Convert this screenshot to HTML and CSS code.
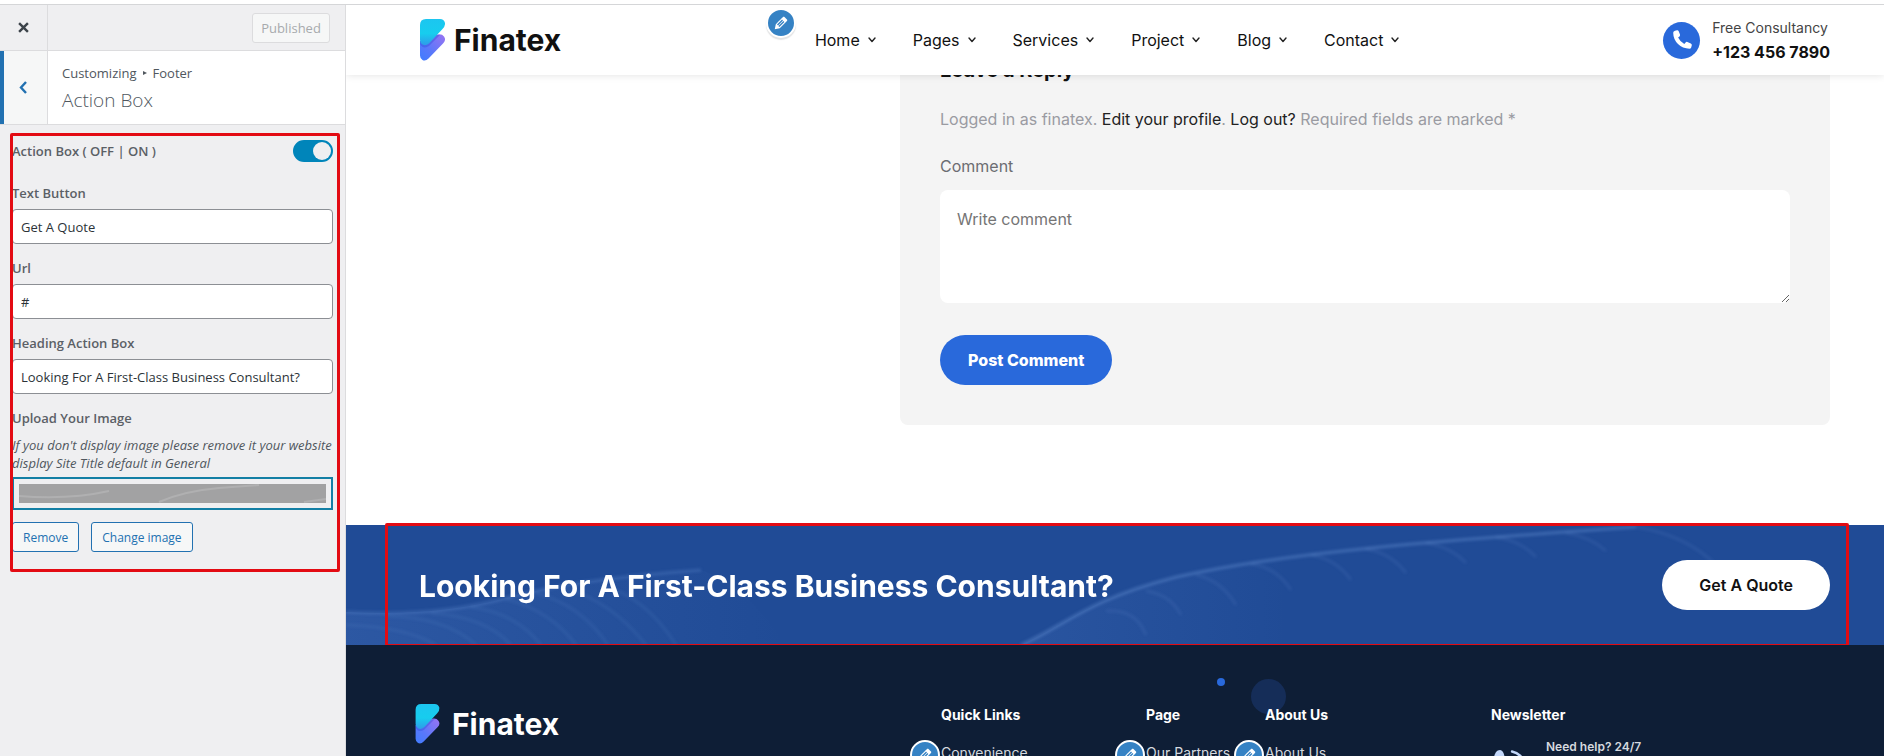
FILE: index.html
```html
<!DOCTYPE html>
<html lang="en">
<head>
<meta charset="utf-8">
<title>Customize: Finatex</title>
<link rel="stylesheet" href="styles.css">
</head>
<body>
<svg class="defs" aria-hidden="true">
  <defs>
    <linearGradient id="cyan" x1="0" y1="0" x2="0" y2="1"><stop offset="0" stop-color="#1cc6f0"/><stop offset=".55" stop-color="#17cdee"/><stop offset="1" stop-color="#2f9be8"/></linearGradient>
    <linearGradient id="violet" x1="1" y1="0" x2="0" y2="1"><stop offset="0" stop-color="#9a74f2"/><stop offset=".6" stop-color="#5a78fa"/><stop offset="1" stop-color="#3f7cff"/></linearGradient>
    <symbol id="logo" viewBox="0 0 25 42">
      <path fill="url(#violet)" d="M0 22 L17 15.500Q22 14.500 24 17.500Q26.500 21 23 24.500L8.500 39.500Q5.500 42.500 2.500 41Q0 39.500 0 36.500Z"/>
      <path fill="#1f3fd0" opacity=".3" d="M0 22 L16 16 L20 16 L9 27Q5 29.500 2 27.500Q0 26 0 24Z"/>
      <path fill="url(#cyan)" d="M6 0H20Q24 0 25 4Q25.300 7 22.500 10L9 24.500Q5.500 27.500 2.500 25.500Q0 24 0 21V6Q0 0 6 0Z"/>
    </symbol>
    <symbol id="pencil" viewBox="0 0 20 20">
      <path fill="#fff" d="M13.890 3.390l2.710 2.720c.46.46.42 1.240.03 1.640l-8.010 8.020-5.560 1.160 1.160-5.580s7.600-7.630 7.990-8.030c.39-.39 1.220-.39 1.680.07zm-2.730 2.790l-5.590 5.610 1.110 1.110 5.540-5.650zm-2.970 8.230l5.580-5.600-1.070-1.080-5.590 5.600z"/>
    </symbol>
    <symbol id="phone" viewBox="0 0 20 20">
      <path fill="#fff" d="M3 .8 5 .2Q6.200 0 6.700 1.200L8 4.600Q8.300 5.700 7.500 6.400L6.100 7.600Q8 11.800 12.300 13.900L13.600 12.400Q14.400 11.600 15.400 12L18.800 13.400Q20 14 19.800 15.200L19.200 17.500Q18.700 18.700 17.500 18.700 10.500 18.500 6 14 1.300 9.500 1.200 2.800 1.300 1.300 3 .8Z"/>
    </symbol>
    <symbol id="chevron" viewBox="0 0 8 6"><path fill="none" stroke="#222" stroke-width="1.400" stroke-linecap="round" stroke-linejoin="round" d="M1 1 4 4.500 7 1"/></symbol>
  </defs>
</svg>
<div class="customizer">
  <aside class="sidebar">
    <div class="actions">
      <button class="close" aria-label="Close"><svg viewBox="0 0 10 10" width="11" height="11"><path d="M1 1 9 9M9 1 1 9" stroke="#3c434a" stroke-width="2.200"/></svg></button>
      <button class="published" disabled>Published</button>
    </div>
    <div class="panel-head">
      <button class="back" aria-label="Back"><svg viewBox="0 0 8 13" width="8" height="13"><path d="M7 1 2 6.500 7 12" fill="none" stroke="#2271b1" stroke-width="2.400"/></svg></button>
      <div class="panel-title">
        <span class="crumbs">Customizing <i class="arrow"></i> Footer</span>
        <h3>Action Box</h3>
      </div>
    </div>
    <form class="controls">
      <div class="toggle-row">
        <label for="onoff">Action Box ( OFF | ON )</label>
        <input class="toggle" id="onoff" type="checkbox" checked>
      </div>
      <div class="field"><label for="btn-text">Text Button</label><input id="btn-text" type="text" value="Get A Quote"></div>
      <div class="field"><label for="url">Url</label><input id="url" type="text" value="#"></div>
      <div class="field"><label for="heading">Heading Action Box</label><input id="heading" type="text" value="Looking For A First-Class Business Consultant?"></div>
      <div class="field upload">
        <span class="label">Upload Your Image</span>
        <p>If you don't display image please remove it your website display Site Title default in General</p>
        <div class="thumb">
          <svg viewBox="0 0 307 19" preserveAspectRatio="none"><rect width="307" height="19" fill="#a2a2a3"/><path d="M0 12Q50 16 90 7M140 18Q165 7 200 4L240 1M285 18L307 15" fill="none" stroke="#b0b0b1" stroke-width="2"/></svg>
        </div>
        <div class="buttons"><button type="button">Remove</button><button type="button">Change image</button></div>
      </div>
    </form>
    <div class="mark mark-panel"></div>
  </aside>

  <div class="preview">
    <header class="site-header">
      <a class="brand" href="#"><svg class="brand-icon"><use href="#logo"/></svg>Finatex</a>
      <nav class="menu">
        <button class="edit edit-menu" aria-label="Edit menu"><svg><use href="#pencil"/></svg></button>
        <a href="#">Home<svg><use href="#chevron"/></svg></a>
        <a href="#">Pages<svg><use href="#chevron"/></svg></a>
        <a href="#">Services<svg><use href="#chevron"/></svg></a>
        <a href="#">Project<svg><use href="#chevron"/></svg></a>
        <a href="#">Blog<svg><use href="#chevron"/></svg></a>
        <a href="#">Contact<svg><use href="#chevron"/></svg></a>
      </nav>
      <div class="call">
        <span class="call-icon"><svg><use href="#phone"/></svg></span>
        <div><span class="call-label">Free Consultancy</span><a href="#">+123 456 7890</a></div>
      </div>
    </header>

    <main class="content">
      <form class="reply">
        <h3>Leave a Reply</h3>
        <p class="logged">Logged in as finatex. <a href="#">Edit your profile</a>. <a href="#">Log out?</a> Required fields are marked *</p>
        <label for="comment">Comment</label>
        <textarea id="comment" placeholder="Write comment"></textarea>
        <button type="button">Post Comment</button>
      </form>
    </main>

    <section class="cta">
      <svg class="waves" viewBox="0 0 1538 120" preserveAspectRatio="none" aria-hidden="true">
        <defs>
          <linearGradient id="w1" x1="0" y1="0" x2="1" y2="0"><stop offset="0" stop-color="#6f9be6" stop-opacity=".16"/><stop offset=".5" stop-color="#6f9be6" stop-opacity=".08"/><stop offset="1" stop-color="#6f9be6" stop-opacity="0"/></linearGradient>
          <linearGradient id="w2" x1="0" y1="0" x2="1" y2="0"><stop offset="0" stop-color="#6f9be6" stop-opacity=".12"/><stop offset=".35" stop-color="#6f9be6" stop-opacity="0"/></linearGradient>
          <filter id="soft" x="-5%" y="-20%" width="110%" height="140%"><feGaussianBlur stdDeviation="1.500"/></filter>
        </defs>
        <path fill="url(#w1)" d="M0 87Q90 92 160 73T355 45Q400 60 440 120H0Z"/>
        <path fill="url(#w2)" d="M675 120C720 100 740 75 830 52C940 27 1100 15 1290 2Q1370 10 1400 60L1440 120Z"/>
        <g fill="none" stroke="#86aeee" filter="url(#soft)">
          <path opacity=".2" stroke-width="3" d="M0 87Q90 92 160 73T355 45"/>
          <path opacity=".3" stroke-width="3" d="M675 120C720 100 740 75 830 52C940 27 1100 15 1290 2"/>
          <path opacity=".09" stroke-width="3" d="M0 100Q60 102 90 120M40 91Q100 92 130 120M85 88Q140 92 165 120M125 82Q170 88 195 120M160 74Q205 86 230 120M190 68Q235 80 262 120M220 64Q265 76 300 120M255 60Q300 72 330 120"/>
          <path opacity=".1" stroke-width="3" d="M760 86Q790 84 800 110M800 66Q825 70 835 90M850 50Q875 55 890 80M905 39Q930 42 945 65M965 30Q990 34 1005 55M1020 24Q1045 28 1060 48M1080 18Q1105 22 1120 38M1150 12Q1175 16 1190 32M1220 8Q1245 12 1260 26M1290 2Q1340 10 1370 40"/>
        </g>
      </svg>
      <h2>Looking For A First-Class Business Consultant?</h2>
      <a class="quote" href="#">Get A Quote</a>
      <div class="mark mark-cta"></div>
    </section>

    <footer class="footer">
      <span class="dot"></span><span class="disc"></span>
      <div class="foot-brand"><a class="brand" href="#"><svg class="brand-icon"><use href="#logo"/></svg>Finatex</a></div>
      <div class="foot-col"><h4>Quick Links</h4><div class="item"><button class="edit" aria-label="Edit quick links"><svg><use href="#pencil"/></svg></button><a href="#">Convenience</a></div></div>
      <div class="foot-col"><h4>Page</h4><div class="item"><button class="edit" aria-label="Edit page links"><svg><use href="#pencil"/></svg></button><a href="#">Our Partners</a></div></div>
      <div class="foot-col"><h4>About Us</h4><div class="item"><button class="edit" aria-label="Edit about links"><svg><use href="#pencil"/></svg></button><a href="#">About Us</a></div></div>
      <div class="foot-col"><h4>Newsletter</h4>
        <div class="help">
          <svg viewBox="0 0 36 36" width="36" height="36"><g fill="#c3d8fb"><path d="M9 0C12 0 14 5 13.500 9L10 13Q14 21 21 24L26 20Q33 21 34 26 32 34 26 34 6 30 3 8 4 0 9 0Z"/></g><g fill="none" stroke="#c3d8fb" stroke-width="2.400" stroke-linecap="round"><path d="M21 1.500Q31 3.500 33 14"/><path d="M21 8Q26 9 27 15"/></g></svg>
          <span>Need help? 24/7</span>
        </div>
      </div>
    </footer>
  </div>
</div>
</body>
</html>
```
FILE: styles.css
```css
* { box-sizing: border-box; }
body { margin: 0; background: #fff; font-family: Inter, "Liberation Sans", sans-serif; }
h2, h3, h4, p { margin: 0; }
a { color: inherit; text-decoration: none; }
button, input, textarea { font: inherit; margin: 0; }
button { cursor: pointer; }
.defs { position: absolute; width: 0; height: 0; }

.customizer { display: flex; height: calc(100vh - 4px); margin-top: 4px; border-top: 1px solid #d5d6d8; overflow: hidden; }

/* Settings panel */
.sidebar { position: relative; flex: 0 0 346px; background: #efeff1; border-right: 1px solid #dcdcde; font-family: "Open Sans", "Noto Sans", sans-serif; font-size: 13px; color: #50575e; }
.actions { display: flex; justify-content: space-between; align-items: center; height: 46px; border-bottom: 1px solid #dcdcde; padding-right: 15px; }
.close { width: 48px; height: 45px; display: grid; place-items: center; background: none; border: 0; border-right: 1px solid #dcdcde; }
.published { height: 30px; width: 78px; padding: 0; background: #f6f7f7; border: 1px solid #dcdcde; border-radius: 3px; color: #a7aaad; }
.panel-head { display: flex; height: 74px; background: #fff; border-bottom: 1px solid #dcdcde; }
.back { width: 48px; padding: 0 6px 0 0; background: #f6f7f7; border: 0; border-left: 4px solid #2271b1; border-right: 1px solid #dcdcde; display: grid; place-items: center; }
.panel-title { padding: 12px 14px; }
.crumbs { display: flex; align-items: center; gap: 6px; line-height: 20px; }
.arrow { border: 2px solid transparent; border-left: 4px solid #50575e; border-right: 0; }
.panel-title h3 { font-size: 19px; line-height: 34px; font-weight: 300; color: #50575e; }
.controls { padding: 14px 12px; }
.toggle-row { display: flex; justify-content: space-between; align-items: center; height: 24px; margin-bottom: 18px; }
.toggle-row label, .field label, .label { display: block; font-size: 13px; line-height: 24px; font-weight: 600; color: #5b6066; }
.toggle { appearance: none; width: 40px; height: 22px; border-radius: 11px; border: 2px solid #0085ba; background: #0085ba; display: flex; justify-content: flex-end; }
.toggle::before { content: ""; width: 18px; height: 18px; border-radius: 50%; background: #efeff1; }
.field { margin-bottom: 12px; }
.field input { display: block; width: 100%; height: 35px; margin-top: 4px; padding: 0 8px; border: 1px solid #8c8f94; border-radius: 4px; background: #fff; color: #2c3338; }
.upload p { font-style: italic; font-size: 13px; line-height: 18px; margin: 6px -8px 5px 0; }
.thumb { height: 33px; padding: 5px; border: 2px solid #137fa5; background: #efeff1; }
.thumb svg { display: block; width: 100%; height: 19px; }
.buttons { display: flex; gap: 12px; margin-top: 12px; }
.buttons button { height: 30px; padding: 0 10px; border: 1px solid #2271b1; border-radius: 3px; background: #f6f7f7; color: #2271b1; font-size: 12px; }

/* Highlight frames */
.mark { position: absolute; border: 3px solid #e30b13; border-radius: 2px; pointer-events: none; }
.mark-panel { inset: 128px 5px auto 10px; height: 439px; }
.mark-cta { inset: -2px 35px -2px 39px; }

/* Site preview */
.preview { flex: 1; min-width: 0; overflow: hidden; color: #111; }
.site-header { position: relative; z-index: 1; display: flex; align-items: center; justify-content: space-between; height: 70px; padding: 0 54px 0 74px; background: #fff; box-shadow: 0 0 8px rgba(0, 0, 0, .12); }
.brand { display: flex; align-items: center; gap: 9px; font-size: 30px; line-height: 42px; font-weight: 700; }
.brand-icon { width: 25px; height: 42px; }
.menu { position: relative; display: flex; gap: 37px; margin-right: 10px; font-size: 16px; line-height: 24px; }
.menu a { display: flex; align-items: center; gap: 8px; }
.menu a svg { width: 8px; height: 6px; }
.edit { position: absolute; width: 30px; height: 30px; padding: 0; border: 2px solid #fff; border-radius: 50%; background: #3582c4; display: grid; place-items: center; box-shadow: 0 2px 1px rgba(60, 67, 74, .15); }
.edit svg { width: 18px; height: 18px; }
.edit-menu { left: -49px; top: -20px; }
.call { display: flex; align-items: center; gap: 12px; }
.call-icon { width: 37px; height: 37px; border-radius: 50%; background: #2969db; display: grid; place-items: center; }
.call-icon svg { width: 20px; height: 20px; }
.call-label { display: block; font-size: 14px; line-height: 24px; color: #444; }
.call a { font-size: 16px; line-height: 24px; font-weight: 700; }

.content { display: grid; grid-template-columns: repeat(12, 1fr); gap: 30px; margin-top: -57px; padding: 0 54px 100px 74px; }
.reply { grid-column: 5 / -1; display: flex; flex-direction: column; align-items: flex-start; padding: 40px; border-radius: 8px; background: #f4f4f4; font-size: 16px; line-height: 24px; color: #6c6d72; }
.reply h3 { font-size: 20px; line-height: 24px; color: #111; margin-bottom: 25px; }
.logged { margin-bottom: 23px; color: #9a9ba2; }
.logged a { color: #222; }
.reply textarea { width: 100%; height: 113px; margin: 12px 0 32px; padding: 17px; border: 0; border-radius: 8px; background: #fff; }
.reply textarea::placeholder { color: #757575; }
.reply button { height: 50px; padding: 0 28px; border: 0; border-radius: 25px; background: #2969db; color: #fff; font-weight: 800; }

.cta { position: relative; display: flex; align-items: center; justify-content: space-between; height: 120px; padding: 0 54px 0 73px; background: #204b96; }
.waves { position: absolute; inset: 0; width: 100%; height: 100%; }
.cta h2 { position: relative; padding-top: 2px; font-size: 30px; line-height: 40px; font-weight: 700; color: #fff; }
.quote { position: relative; padding: 13px 37px; border-radius: 25px; background: #fff; font-size: 16px; line-height: 24px; font-weight: 600; }

.footer { position: relative; display: grid; grid-template-columns: 526fr 205fr 119fr 226fr 339fr; height: 200px; padding: 58px 54px 0 69px; background: #0e1e36; color: #fff; }
.footer .brand { gap: 12px; }
.foot-brand .brand-icon { height: 40px; }
.foot-col { position: relative; }
.foot-col h4 { font-size: 14px; line-height: 24px; font-weight: 700; }
.item { position: relative; margin-top: 14px; font-size: 14px; line-height: 24px; color: #d5d9df; }
.item .edit { left: -31px; top: -1px; box-shadow: none; }
.help { display: flex; gap: 19px; margin-top: 8px; font-size: 12px; line-height: 24px; font-weight: 600; color: #d5d9df; }
.help svg { margin-top: 15px; }
.dot, .disc { position: absolute; border-radius: 50%; }
.dot { left: 871px; top: 33px; width: 8px; height: 8px; background: #2969db; }
.disc { left: 905px; top: 34px; width: 35px; height: 35px; background: #152d58; }
```
